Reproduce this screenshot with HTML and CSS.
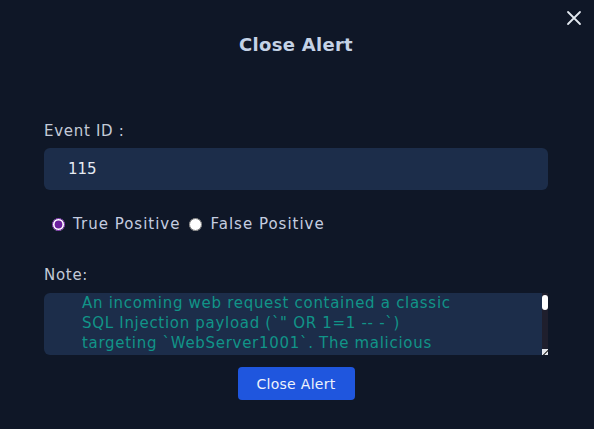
FILE: index.html
```html
<!DOCTYPE html>
<html>
<head>
<meta charset="utf-8">
<link rel="stylesheet" href="styles.css">
</head>
<body>
<div class="modal">
  <button class="close-x" aria-label="Close">
    <svg width="16" height="16" viewBox="0 0 16 16"><path d="M2 2 L14 14 M14 2 L2 14" stroke="#e2e8f0" stroke-width="1.8" stroke-linecap="round"/></svg>
  </button>
  <h2 class="title">Close Alert</h2>
  <div class="form">
    <label class="label">Event ID :</label>
    <input class="field" type="text" value="115">
    <div class="radios">
      <label class="radio"><input type="radio" name="v" checked> True Positive</label>
      <label class="radio"><input type="radio" name="v"> False Positive</label>
    </div>
    <label class="label note-label">Note:</label>
    <div class="note-wrap">
      <textarea class="note">An incoming web request contained a classic
SQL Injection payload (`" OR 1=1 -- -`)
targeting `WebServer1001`. The malicious
request originated from a Global Server IP
and was flagged by the WAF.</textarea>
      <div class="scrollbar">
        <div class="thumb"></div>
        <div class="resizer"></div>
      </div>
    </div>
    <div class="actions">
      <button class="btn">Close Alert</button>
    </div>
  </div>
</div>
</body>
</html>
```
FILE: styles.css
```css
* { box-sizing: border-box; }
html, body { margin: 0; height: 100%; }
body {
  background: #0f1727;
  font-family: "DejaVu Sans", "Open Sans", sans-serif;
  color: #c7cfdd;
}
.modal {
  position: relative;
  width: 594px;
  height: 429px;
  padding: 0 46px 0 44px;
}
.close-x {
  position: absolute;
  top: 10px;
  right: 12px;
  background: none;
  border: 0;
  padding: 0;
  width: 16px;
  height: 16px;
  cursor: pointer;
}
.close-x svg { display: block; }
.title {
  margin: 0;
  padding-top: 34px;
  text-align: center;
  font-size: 18px;
  font-weight: bold;
  line-height: 22px;
  color: #c4d2e6;
  letter-spacing: 0.3px;
}
.form {
  display: flex;
  flex-direction: column;
  padding-top: 66px;
}
.label {
  font-size: 15px;
  line-height: 18px;
  color: #c3cad8;
  letter-spacing: 0.7px;
}
.field {
  margin-top: 8px;
  height: 42px;
  width: 504px;
  border: 0;
  border-radius: 6px;
  background: #1c2d4a;
  color: #e6ebf3;
  font-family: inherit;
  font-size: 15px;
  padding: 0 24px;
  outline: none;
}
.radios {
  display: flex;
  align-items: center;
  margin-top: 25px;
  padding-left: 3px;
  gap: 4px;
}
.radio {
  display: flex;
  align-items: center;
  font-size: 15px;
  line-height: 18px;
  color: #c5cde0;
  letter-spacing: 1px;
  gap: 8px;
}
.radio input {
  margin: 0 0 0 5px;
  width: 13px;
  height: 13px;
  accent-color: #6b1f9e;
}
.note-label { margin-top: 33px; }
.note-wrap {
  position: relative;
  margin-top: 9px;
  width: 504px;
  height: 62px;
}
.note {
  display: block;
  width: 504px;
  height: 62px;
  border: 0;
  border-radius: 6px;
  background: #1c2d4a;
  color: #119488;
  font-family: inherit;
  font-size: 15px;
  line-height: 20px;
  padding: 0 0 0 38px;
  white-space: pre;
  overflow: hidden;
  outline: none;
  resize: none;
  letter-spacing: 0.7px;
}
.scrollbar {
  position: absolute;
  top: 0;
  right: 0;
  width: 6px;
  height: 62px;
  background: #1f1f2d;
  display: flex;
  flex-direction: column;
  justify-content: space-between;
  padding-top: 2px;
}
.thumb {
  width: 6px;
  height: 15px;
  background: #ffffff;
  border-radius: 3px;
}
.resizer {
  width: 6px;
  height: 6px;
  background: #e4e7ec;
  background-image: linear-gradient(135deg, transparent 55%, #555 55%, #555 70%, transparent 70%);
}
.actions {
  display: flex;
  justify-content: center;
  margin-top: 12px;
}
.btn {
  width: 117px;
  height: 33px;
  border: 0;
  border-radius: 4px;
  background: #1f56de;
  color: #eef2fb;
  font-family: inherit;
  font-size: 14px;
  letter-spacing: 0.3px;
  cursor: pointer;
}
```
